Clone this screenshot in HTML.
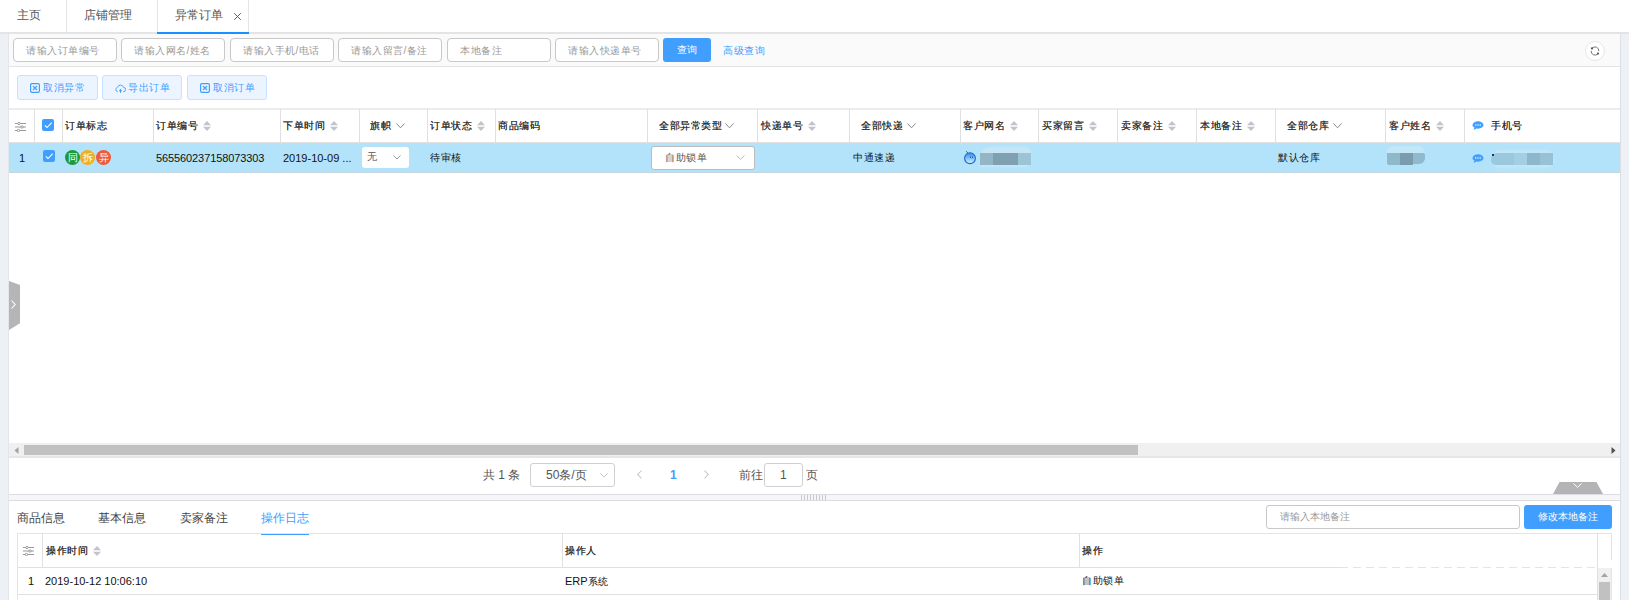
<!DOCTYPE html>
<html><head><meta charset="utf-8">
<style>
*{box-sizing:border-box;margin:0;padding:0}
html,body{width:1629px;height:600px;overflow:hidden;background:#fff;font-family:"Liberation Sans",sans-serif;color:#333}
.a{position:absolute}
.t{position:absolute;white-space:nowrap;line-height:1}
#tabs{left:0;top:0;width:1629px;height:32px;background:#fff}
#tabline{left:0;top:32px;width:1629px;height:2px;background:#e4e4e4}
#gl{left:0;top:34px;width:8px;height:566px;background:#edf0f5}
#gr{left:1620px;top:34px;width:9px;height:566px;background:#edf0f5;border-left:1px solid #dcdfe5}
#panel{left:8px;top:34px;width:1612px;height:566px;background:#fff;border-left:1px solid #e2e5ea}
#search{left:9px;top:34px;width:1611px;height:33px;background:#fafafa;border-bottom:1px solid #e4e4e4}
.inp{position:absolute;letter-spacing:0.5px;top:38px;height:24px;width:104px;border:1px solid #c8c8c8;border-radius:4px;background:#fff;font-size:10px;color:#999;line-height:23px;text-align:left;padding-left:12px}
.btnp{position:absolute;letter-spacing:0.5px;top:75px;height:25px;border:1px solid #c6e2ff;border-radius:3px;background:#ecf5ff;color:#409eff;font-size:10px;line-height:22px}
.hd{position:absolute;top:109px;height:34px;border-top:1px solid #e4e4e4;border-bottom:1px solid #e0e0e0}
.th{position:absolute;top:109px;height:34px;border-right:1px solid #e0e0e0}
.ht{position:absolute;top:121px;font-size:10px;letter-spacing:0.5px;color:#333;text-shadow:0.35px 0 0 #444;white-space:nowrap;line-height:1}
.rt{position:absolute;top:153px;font-size:11px;color:#111;white-space:nowrap;line-height:1}
.sort{position:absolute;top:121px;width:8px;height:10px}
.dd{position:absolute;top:123px;width:9px;height:6px}
</style></head><body>
<!-- top tabs -->
<div class="a" id="tabs"></div>
<div class="a" id="tabline"></div>
<div class="a" style="left:66px;top:0;width:1px;height:32px;background:#e4e4e4"></div>
<div class="a" style="left:157px;top:0;width:1px;height:32px;background:#e4e4e4"></div>
<div class="a" style="left:248px;top:0;width:1px;height:32px;background:#e4e4e4"></div>
<div class="a" style="left:157px;top:32px;width:92px;height:2px;background:#1890ff"></div>
<div class="t" style="left:17px;top:9px;font-size:12px;color:#555">主页</div>
<div class="t" style="left:84px;top:9px;font-size:12px;color:#555">店铺管理</div>
<div class="t" style="left:175px;top:9px;font-size:12px;color:#555">异常订单</div>
<svg class="a" style="left:233px;top:12px" width="9" height="9" viewBox="0 0 9 9"><path d="M1.2 1.2L7.8 7.8M7.8 1.2L1.2 7.8" stroke="#555" stroke-width="0.95"/></svg>

<div class="a" id="gl"></div>
<div class="a" id="gr"></div>
<div class="a" id="panel"></div>
<div class="a" id="search"></div>

<!-- search row -->
<div class="inp" style="left:13px">请输入订单编号</div>
<div class="inp" style="left:121px">请输入网名/姓名</div>
<div class="inp" style="left:230px">请输入手机/电话</div>
<div class="inp" style="left:338px">请输入留言/备注</div>
<div class="inp" style="left:447px">本地备注</div>
<div class="inp" style="left:555px">请输入快递单号</div>
<div class="a" style="left:663px;top:38px;width:48px;height:24px;background:#409eff;border-radius:3px;color:#fff;font-size:10px;line-height:24px;text-align:center">查询</div>
<div class="t" style="left:723px;top:46px;font-size:10px;color:#409eff;letter-spacing:0.5px">高级查询</div>
<div class="a" style="left:1585px;top:40.5px;width:20px;height:20px;border:1px solid #e4e6ec;border-radius:50%;background:#fff"></div>
<svg class="a" style="left:1589px;top:44.5px" width="12" height="12" viewBox="0 0 12 12"><path d="M3.0 3.4A3.8 3.8 0 0 1 9.8 6.2" fill="none" stroke="#777" stroke-width="1"/><path d="M9.0 8.6A3.8 3.8 0 0 1 2.2 5.8" fill="none" stroke="#777" stroke-width="1"/><circle cx="3.0" cy="3.4" r="1.1" fill="#555"/><circle cx="9.0" cy="8.6" r="1.1" fill="#555"/></svg>
<!-- toolbar -->
<div class="btnp" style="left:17px;width:81px"></div>
<div class="btnp" style="left:102px;width:80px"></div>
<div class="btnp" style="left:187px;width:80px"></div>
<div class="t" style="left:43px;top:83px;font-size:10px;color:#409eff;letter-spacing:0.5px">取消异常</div>
<div class="t" style="left:128px;top:83px;font-size:10px;color:#409eff;letter-spacing:0.5px">导出订单</div>
<div class="t" style="left:213px;top:83px;font-size:10px;color:#409eff;letter-spacing:0.5px">取消订单</div>
<svg class="a" style="left:30px;top:83px" width="10" height="10" viewBox="0 0 10 10"><rect x="0.6" y="0.6" width="8.8" height="8.8" rx="1.3" fill="none" stroke="#409eff" stroke-width="1.2"/><path d="M3 3L7 7M7 3L3 7" stroke="#409eff" stroke-width="1.1"/></svg>
<svg class="a" style="left:200px;top:83px" width="10" height="10" viewBox="0 0 10 10"><rect x="0.6" y="0.6" width="8.8" height="8.8" rx="1.3" fill="none" stroke="#409eff" stroke-width="1.2"/><path d="M3 3L7 7M7 3L3 7" stroke="#409eff" stroke-width="1.1"/></svg>
<svg class="a" style="left:115px;top:84px" width="11" height="9" viewBox="0 0 11 9"><path d="M3 7.6H2.6A2.1 2.1 0 0 1 2.3 3.5A3.3 3.3 0 0 1 8.6 3.4A2.1 2.1 0 0 1 8.5 7.6H8" fill="none" stroke="#409eff" stroke-width="0.9"/><path d="M5.5 4.8L7.3 7.2H3.7Z" fill="#409eff"/><path d="M5.5 7V8.8" stroke="#409eff" stroke-width="1"/></svg>
<!-- table -->
<div class="a" style="left:9px;top:108px;width:1611px;height:2px;background:#ececec"></div>
<div class="a" style="left:9px;top:142px;width:1611px;height:1px;background:#e0e0e0"></div>
<div class="a" style="left:9px;top:143px;width:1611px;height:29px;background:#b3e3fa"></div><div class="a" style="left:9px;top:143px;width:1611px;height:1px;background:#c3dde9"></div>
<div class="a" style="left:9px;top:172px;width:1611px;height:1px;background:#c6d6de"></div>
<div class="a" style="left:34px;top:109px;width:1px;height:33px;background:#e0e0e0"></div>
<div class="a" style="left:62px;top:109px;width:1px;height:33px;background:#e0e0e0"></div>
<div class="a" style="left:153px;top:109px;width:1px;height:33px;background:#e0e0e0"></div>
<div class="a" style="left:280px;top:109px;width:1px;height:33px;background:#e0e0e0"></div>
<div class="a" style="left:359px;top:109px;width:1px;height:33px;background:#e0e0e0"></div>
<div class="a" style="left:427px;top:109px;width:1px;height:33px;background:#e0e0e0"></div>
<div class="a" style="left:495px;top:109px;width:1px;height:33px;background:#e0e0e0"></div>
<div class="a" style="left:647px;top:109px;width:1px;height:33px;background:#e0e0e0"></div>
<div class="a" style="left:757px;top:109px;width:1px;height:33px;background:#e0e0e0"></div>
<div class="a" style="left:849px;top:109px;width:1px;height:33px;background:#e0e0e0"></div>
<div class="a" style="left:960px;top:109px;width:1px;height:33px;background:#e0e0e0"></div>
<div class="a" style="left:1038px;top:109px;width:1px;height:33px;background:#e0e0e0"></div>
<div class="a" style="left:1117px;top:109px;width:1px;height:33px;background:#e0e0e0"></div>
<div class="a" style="left:1196px;top:109px;width:1px;height:33px;background:#e0e0e0"></div>
<div class="a" style="left:1275px;top:109px;width:1px;height:33px;background:#e0e0e0"></div>
<div class="a" style="left:1385px;top:109px;width:1px;height:33px;background:#e0e0e0"></div>
<div class="a" style="left:1464px;top:109px;width:1px;height:33px;background:#e0e0e0"></div>
<div class="ht" style="left:65px">订单标志</div>
<div class="ht" style="left:156px">订单编号</div>
<svg class="sort" style="left:203px" viewBox="0 0 8 10"><path d="M4 0L8 4.3H0Z M4 10L8 5.7H0Z" fill="#c0c4cc"/></svg>
<div class="ht" style="left:283px">下单时间</div>
<svg class="sort" style="left:330px" viewBox="0 0 8 10"><path d="M4 0L8 4.3H0Z M4 10L8 5.7H0Z" fill="#c0c4cc"/></svg>
<div class="ht" style="left:370px">旗帜</div>
<svg class="dd" style="left:396px" viewBox="0 0 9 6"><path d="M0.5 0.5L4.5 4.8L8.5 0.5" fill="none" stroke="#888" stroke-width="1"/></svg>
<div class="ht" style="left:430px">订单状态</div>
<svg class="sort" style="left:477px" viewBox="0 0 8 10"><path d="M4 0L8 4.3H0Z M4 10L8 5.7H0Z" fill="#c0c4cc"/></svg>
<div class="ht" style="left:498px">商品编码</div>
<div class="ht" style="left:659px">全部异常类型</div>
<svg class="dd" style="left:725px" viewBox="0 0 9 6"><path d="M0.5 0.5L4.5 4.8L8.5 0.5" fill="none" stroke="#888" stroke-width="1"/></svg>
<div class="ht" style="left:761px">快递单号</div>
<svg class="sort" style="left:808px" viewBox="0 0 8 10"><path d="M4 0L8 4.3H0Z M4 10L8 5.7H0Z" fill="#c0c4cc"/></svg>
<div class="ht" style="left:861px">全部快递</div>
<svg class="dd" style="left:907px" viewBox="0 0 9 6"><path d="M0.5 0.5L4.5 4.8L8.5 0.5" fill="none" stroke="#888" stroke-width="1"/></svg>
<div class="ht" style="left:963px">客户网名</div>
<svg class="sort" style="left:1010px" viewBox="0 0 8 10"><path d="M4 0L8 4.3H0Z M4 10L8 5.7H0Z" fill="#c0c4cc"/></svg>
<div class="ht" style="left:1042px">买家留言</div>
<svg class="sort" style="left:1089px" viewBox="0 0 8 10"><path d="M4 0L8 4.3H0Z M4 10L8 5.7H0Z" fill="#c0c4cc"/></svg>
<div class="ht" style="left:1121px">卖家备注</div>
<svg class="sort" style="left:1168px" viewBox="0 0 8 10"><path d="M4 0L8 4.3H0Z M4 10L8 5.7H0Z" fill="#c0c4cc"/></svg>
<div class="ht" style="left:1200px">本地备注</div>
<svg class="sort" style="left:1247px" viewBox="0 0 8 10"><path d="M4 0L8 4.3H0Z M4 10L8 5.7H0Z" fill="#c0c4cc"/></svg>
<div class="ht" style="left:1287px">全部仓库</div>
<svg class="dd" style="left:1333px" viewBox="0 0 9 6"><path d="M0.5 0.5L4.5 4.8L8.5 0.5" fill="none" stroke="#888" stroke-width="1"/></svg>
<div class="ht" style="left:1389px">客户姓名</div>
<svg class="sort" style="left:1436px" viewBox="0 0 8 10"><path d="M4 0L8 4.3H0Z M4 10L8 5.7H0Z" fill="#c0c4cc"/></svg>
<div class="ht" style="left:1491px">手机号</div>

<!-- header icons -->
<svg class="a" style="left:15px;top:122px" width="11" height="10" viewBox="0 0 11 10"><path d="M0 1.5H11M0 5H11M0 8.5H11" stroke="#999" stroke-width="1"/><circle cx="4" cy="1.5" r="1.2" fill="#fff" stroke="#888" stroke-width="0.8"/><circle cx="7" cy="5" r="1.2" fill="#fff" stroke="#888" stroke-width="0.8"/><circle cx="3.5" cy="8.5" r="1.2" fill="#fff" stroke="#888" stroke-width="0.8"/></svg>
<div class="a" style="left:42px;top:119px;width:12px;height:12px;background:#409eff;border-radius:2px"></div>
<svg class="a" style="left:42px;top:119px" width="12" height="12" viewBox="0 0 12 12"><path d="M2.8 6.4L5 8.5L9.8 3.6" fill="none" stroke="#fff" stroke-width="1.05"/></svg>
<svg class="a" style="left:1472px;top:121px" width="12" height="9" viewBox="0 0 12 9"><ellipse cx="6" cy="4" rx="5.5" ry="3.7" fill="#409eff"/><path d="M2.5 6.5L1.5 9L5 7.2Z" fill="#409eff"/><circle cx="3.8" cy="4" r="0.7" fill="#fff"/><circle cx="6" cy="4" r="0.7" fill="#fff"/><circle cx="8.2" cy="4" r="0.7" fill="#fff"/></svg>
<!-- row -->
<div class="rt" style="left:19px;font-size:11px">1</div>
<div class="a" style="left:43px;top:150px;width:12px;height:12px;background:#409eff;border-radius:2px"></div>
<svg class="a" style="left:43px;top:150px" width="12" height="12" viewBox="0 0 12 12"><path d="M2.8 6.4L5 8.5L9.8 3.6" fill="none" stroke="#fff" stroke-width="1.05"/></svg>
<div class="a" style="left:65px;top:150px;width:15px;height:15px;border-radius:50%;background:#1a9a3a;color:#fff;font-size:10px;line-height:15px;text-align:center">同</div>
<div class="a" style="left:80px;top:150px;width:15px;height:15px;border-radius:50%;background:#eeb020;color:#fff;font-size:10px;line-height:15px;text-align:center">拆</div>
<div class="a" style="left:96px;top:150px;width:15px;height:15px;border-radius:50%;background:#ef5a3a;color:#fff;font-size:10px;line-height:15px;text-align:center">异</div>
<div class="rt" style="left:156px;font-size:11px;letter-spacing:-0.1px">565560237158073303</div>
<div class="rt" style="left:283px;font-size:11px">2019-10-09 ...</div>
<div class="a" style="left:362px;top:147px;width:47px;height:21px;background:#fff;border-radius:3px"></div>
<div class="rt" style="left:367px;top:152px;font-size:10px;color:#555">无</div>
<svg class="a" style="left:393px;top:155px" width="8" height="5" viewBox="0 0 8 5"><path d="M0.5 0.5L4 4L7.5 0.5" fill="none" stroke="#999" stroke-width="1"/></svg>
<div class="rt" style="left:430px;font-size:10px;letter-spacing:0.5px">待审核</div>
<div class="a" style="left:651px;top:146px;width:104px;height:24px;background:#fff;border:1px solid #bbb;border-radius:3px"></div>
<div class="rt" style="left:665px;top:153px;font-size:10px;color:#555;letter-spacing:0.5px">自助锁单</div>
<svg class="a" style="left:736px;top:155px" width="9" height="5" viewBox="0 0 9 5"><path d="M0.5 0.5L4.5 4.3L8.5 0.5" fill="none" stroke="#bbb" stroke-width="1"/></svg>
<div class="rt" style="left:853px;font-size:10px;letter-spacing:0.5px">中通速递</div>
<div class="rt" style="left:1278px;font-size:10px;letter-spacing:0.5px">默认仓库</div>
<svg class="a" style="left:963px;top:150px" width="14" height="15" viewBox="0 0 14 15"><defs><linearGradient id="ww" x1="0" y1="0" x2="0" y2="1"><stop offset="0" stop-color="#2f8ae8"/><stop offset="1" stop-color="#d8f6ff"/></linearGradient></defs><circle cx="7" cy="8.2" r="5.4" fill="url(#ww)" stroke="#1f66c8" stroke-width="1.1"/><path d="M3 1.2L5 3" stroke="#2a6cc8" stroke-width="1"/><rect x="7" y="6.6" width="1" height="1.5" fill="#1f5bb8"/><rect x="9" y="6.6" width="1" height="1.5" fill="#1f5bb8"/></svg>
<div class="a" style="left:980px;top:147px;width:51px;height:20px;background:#c6e6f5;border-radius:10px 6px 6px 2px;filter:blur(1px)"></div>
<div class="a" style="left:980px;top:153px;width:13px;height:12px;background:#93b5c6"></div>
<div class="a" style="left:993px;top:153px;width:25px;height:12px;background:#7fa0b0"></div>
<div class="a" style="left:1018px;top:153px;width:13px;height:12px;background:#9cc3d6"></div>
<div class="a" style="left:1387px;top:146px;width:38px;height:7px;background:#c4e7f7;border-radius:7px 8px 0 0"></div>
<div class="a" style="left:1387px;top:153px;width:13px;height:12px;background:#90b8cb;border-radius:0 0 0 2px"></div>
<div class="a" style="left:1400px;top:153px;width:13px;height:12px;background:#7a9cac"></div>
<div class="a" style="left:1413px;top:153px;width:12px;height:11px;background:#8fb9cd;border-radius:0 2px 6px 0"></div>
<svg class="a" style="left:1472px;top:154px" width="12" height="9" viewBox="0 0 12 9"><ellipse cx="6" cy="4" rx="5.5" ry="3.7" fill="#409eff"/><path d="M2.5 6.5L1.5 9L5 7.2Z" fill="#409eff"/><circle cx="3.8" cy="4" r="0.7" fill="#fff"/><circle cx="6" cy="4" r="0.7" fill="#fff"/><circle cx="8.2" cy="4" r="0.7" fill="#fff"/></svg>
<div class="a" style="left:1492px;top:150px;width:62px;height:18px;background:#c2e6f7;border-radius:8px;filter:blur(1px)"></div>
<div class="a" style="left:1491px;top:153px;width:23px;height:12px;background:#9ac9de;border-radius:6px 0 0 5px"></div>
<div class="a" style="left:1514px;top:153px;width:13px;height:12px;background:#a3cfe5"></div>
<div class="a" style="left:1527px;top:153px;width:13px;height:12px;background:#8eb7ca"></div>
<div class="a" style="left:1540px;top:153px;width:13px;height:12px;background:#97c1d4"></div>
<div class="a" style="left:1492px;top:154px;width:2px;height:2px;background:#2a2a7a"></div>

<!-- h scrollbar -->
<div class="a" style="left:9px;top:443px;width:1611px;height:13px;background:#f0f0f0"></div>
<div class="a" style="left:9px;top:456px;width:1611px;height:2px;background:#e6e6e6"></div>
<div class="a" style="left:24px;top:445px;width:1114px;height:10px;background:#c1c1c1"></div>
<svg class="a" style="left:14px;top:447px" width="5" height="7" viewBox="0 0 5 7"><path d="M4.5 0V7L0.5 3.5Z" fill="#a3a3a3"/></svg>
<svg class="a" style="left:1611px;top:447px" width="5" height="7" viewBox="0 0 5 7"><path d="M0.5 0V7L4.5 3.5Z" fill="#505050"/></svg>
<!-- pagination -->
<div class="t" style="left:483px;top:469px;font-size:12px;color:#555">共 1 条</div>
<div class="a" style="left:530px;top:463px;width:85px;height:24px;border:1px solid #d0d0d0;border-radius:3px;background:#fff"></div>
<div class="t" style="left:546px;top:469px;font-size:12px;color:#555">50条/页</div>
<svg class="a" style="left:600px;top:473px" width="8" height="5" viewBox="0 0 8 5"><path d="M0.5 0.5L4 4L7.5 0.5" fill="none" stroke="#c0c4cc" stroke-width="1"/></svg>
<svg class="a" style="left:637px;top:470px" width="5" height="9" viewBox="0 0 5 9"><path d="M4.5 0.5L0.8 4.5L4.5 8.5" fill="none" stroke="#c0c4cc" stroke-width="1.1"/></svg>
<div class="t" style="left:670px;top:469px;font-size:12px;color:#409eff;font-weight:bold">1</div>
<svg class="a" style="left:704px;top:470px" width="5" height="9" viewBox="0 0 5 9"><path d="M0.5 0.5L4.2 4.5L0.5 8.5" fill="none" stroke="#c0c4cc" stroke-width="1.1"/></svg>
<div class="t" style="left:739px;top:469px;font-size:12px;color:#555">前往</div>
<div class="a" style="left:764px;top:463px;width:39px;height:24px;border:1px solid #d0d0d0;border-radius:3px;background:#fff"></div>
<div class="t" style="left:780px;top:469px;font-size:12px;color:#555">1</div>
<div class="t" style="left:806px;top:469px;font-size:12px;color:#555">页</div>
<!-- splitter -->
<div class="a" style="left:9px;top:494px;width:1611px;height:7px;background:#f6f6f8;border-top:1px solid #dcdce2;border-bottom:1px solid #dcdce2"></div>
<div class="a" style="left:801px;top:495px;width:25px;height:5px;background:repeating-linear-gradient(90deg,#c6c8d2 0 1px,transparent 1px 3px)"></div>
<div class="a" style="left:1553px;top:482px;width:50px;height:12px;background:#b4b4b4;clip-path:polygon(13% 0,87% 0,100% 100%,0 100%)"></div>
<svg class="a" style="left:1573px;top:483px" width="9" height="5" viewBox="0 0 9 5"><path d="M0.5 0.5L4.5 4.3L8.5 0.5" fill="none" stroke="#fff" stroke-width="1"/></svg>
<!-- side collapse tab -->
<div class="a" style="left:9px;top:281px;width:11px;height:49px;background:#b5b5b5;clip-path:polygon(0 0,100% 8%,100% 86%,0 100%)"></div>
<svg class="a" style="left:11px;top:300px" width="5" height="9" viewBox="0 0 5 9"><path d="M0.5 0.5L4.2 4.5L0.5 8.5" fill="none" stroke="#fff" stroke-width="1.1"/></svg>
<!-- bottom tabs -->
<div class="t" style="left:17px;top:512px;font-size:12px;color:#444">商品信息</div>
<div class="t" style="left:98px;top:512px;font-size:12px;color:#444">基本信息</div>
<div class="t" style="left:180px;top:512px;font-size:12px;color:#444">卖家备注</div>
<div class="t" style="left:261px;top:512px;font-size:12px;color:#409eff">操作日志</div>
<div class="a" style="left:261px;top:533px;width:48px;height:2px;background:#409eff"></div>
<div class="a" style="left:1266px;top:505px;width:254px;height:24px;border:1px solid #c8c8c8;border-radius:3px;background:#fff;font-size:10px;color:#999;line-height:22px;padding-left:13px">请输入本地备注</div>
<div class="a" style="left:1524px;top:505px;width:88px;height:24px;border-radius:3px;background:#409eff;color:#fff;font-size:10px;line-height:24px;text-align:center">修改本地备注</div>
<!-- bottom table -->
<div class="a" style="left:17px;top:533px;width:1595px;height:67px;border:1px solid #e4e4e4;border-bottom:none"></div>
<div class="a" style="left:18px;top:567px;width:1322px;height:1px;background:#e0e0e0"></div><div class="a" style="left:1340px;top:567px;width:257px;height:1px;background:repeating-linear-gradient(90deg,#e4e4e4 0 8px,#fff 8px 13px)"></div><div class="a" style="left:1610px;top:560px;width:2px;height:8px;background:#fff"></div>
<div class="a" style="left:18px;top:594px;width:1580px;height:1px;background:#e0e0e0"></div>
<div class="a" style="left:42px;top:534px;width:1px;height:33px;background:#e0e0e0"></div>
<div class="a" style="left:562px;top:534px;width:1px;height:33px;background:#e0e0e0"></div>
<div class="a" style="left:1079px;top:534px;width:1px;height:33px;background:#e0e0e0"></div>
<div class="a" style="left:1597px;top:534px;width:1px;height:66px;background:#e0e0e0"></div>
<svg class="a" style="left:23px;top:546px" width="11" height="10" viewBox="0 0 11 10"><path d="M0 1.5H11M0 5H11M0 8.5H11" stroke="#999" stroke-width="1"/><circle cx="4" cy="1.5" r="1.2" fill="#fff" stroke="#888" stroke-width="0.8"/><circle cx="7" cy="5" r="1.2" fill="#fff" stroke="#888" stroke-width="0.8"/><circle cx="3.5" cy="8.5" r="1.2" fill="#fff" stroke="#888" stroke-width="0.8"/></svg>
<div class="t" style="left:46px;top:546px;font-size:10px;letter-spacing:0.5px;color:#333;text-shadow:0.35px 0 0 #444">操作时间</div>
<svg class="a" style="left:93px;top:546px" width="8" height="10" viewBox="0 0 8 10"><path d="M4 0L8 4.3H0Z M4 10L8 5.7H0Z" fill="#c0c4cc"/></svg>
<div class="t" style="left:565px;top:546px;font-size:10px;letter-spacing:0.5px;color:#333;text-shadow:0.35px 0 0 #444">操作人</div>
<div class="t" style="left:1082px;top:546px;font-size:10px;letter-spacing:0.5px;color:#333;text-shadow:0.35px 0 0 #444">操作</div>
<div class="t" style="left:28px;top:576px;font-size:11px;color:#111">1</div>
<div class="t" style="left:45px;top:576px;font-size:11px;color:#111">2019-10-12 10:06:10</div>
<div class="t" style="left:565px;top:576px;font-size:11px;color:#111">ERP<span style="font-size:10px">系统</span></div>
<div class="t" style="left:1082px;top:576px;font-size:10px;color:#111;letter-spacing:0.5px">自助锁单</div>
<div class="a" style="left:1598px;top:568px;width:13px;height:32px;background:#f0f0f0"></div>
<svg class="a" style="left:1601px;top:573px" width="7" height="4" viewBox="0 0 7 4"><path d="M3.5 0L7 4H0Z" fill="#a3a3a3"/></svg>
<div class="a" style="left:1599px;top:582px;width:11px;height:18px;background:#c1c1c1"></div>
</body></html>
